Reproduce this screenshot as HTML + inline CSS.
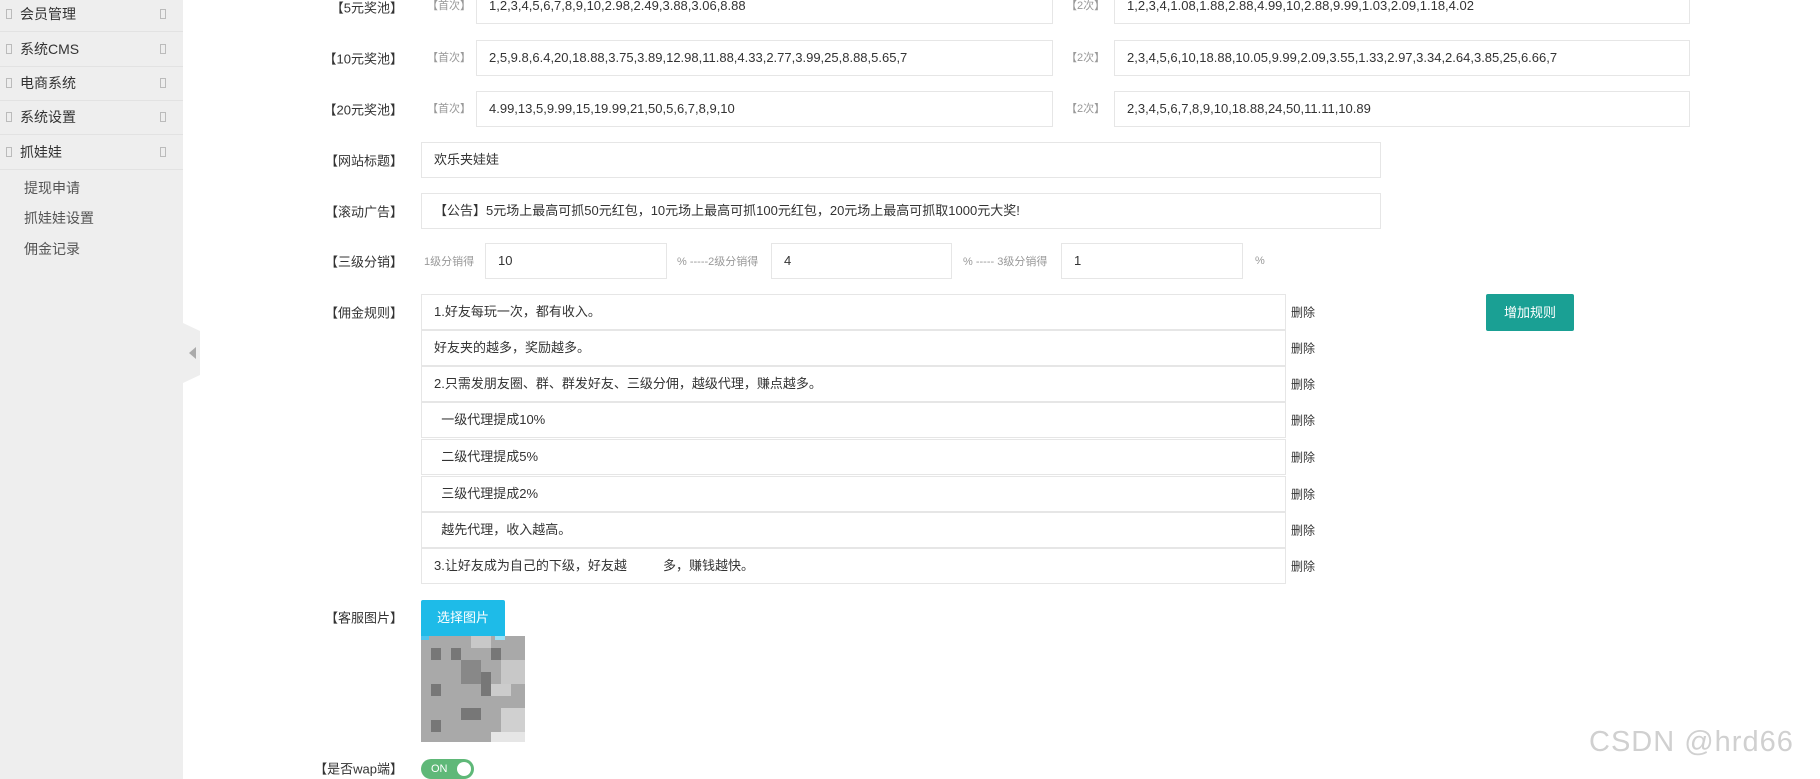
<!DOCTYPE html>
<html><head><meta charset="utf-8"><style>
*{margin:0;padding:0;box-sizing:border-box}
body{width:1820px;height:779px;overflow:hidden;background:#fff;position:relative;font-family:"Liberation Sans","Noto Sans CJK SC",sans-serif;font-size:13px;color:#333}
.a{position:absolute;white-space:pre}
#sb{position:absolute;left:0;top:0;width:183px;height:779px;background:#eeeeee}
.mi{position:absolute;left:0;width:183px;height:35px;border-bottom:1px solid #e2e2e2;font-size:14px;color:#333}
.mi .t{position:absolute;left:20px;top:50%;transform:translateY(-50%)}
.ic{position:absolute;top:50%;width:6px;height:10px;border:1px solid #bbb;transform:translateY(-50%)}
.sub{position:absolute;left:24px;font-size:14px;color:#555}
.lb{position:absolute;right:1417px;font-size:13px;color:#333;transform:translateY(-50%);white-space:nowrap}
.in{position:absolute;height:36px;border:1px solid #e6e6e6;background:#fff;padding-left:12px;line-height:34px;white-space:pre;font-size:13px;color:#333}
.g{position:absolute;font-size:11px;color:#999;transform:translateY(-50%);white-space:nowrap}
.del{position:absolute;left:1291px;font-size:12px;color:#333;transform:translateY(-50%)}
</style></head><body>
<div id="sb">
<div class="mi" style="top:-3px"><span class="ic" style="left:6px"></span><span class="t">会员管理</span><span class="ic" style="left:160px"></span></div>
<div class="mi" style="top:32px"><span class="ic" style="left:6px"></span><span class="t">系统CMS</span><span class="ic" style="left:160px"></span></div>
<div class="mi" style="top:66px"><span class="ic" style="left:6px"></span><span class="t">电商系统</span><span class="ic" style="left:160px"></span></div>
<div class="mi" style="top:100px"><span class="ic" style="left:6px"></span><span class="t">系统设置</span><span class="ic" style="left:160px"></span></div>
<div class="mi" style="top:135px"><span class="ic" style="left:6px"></span><span class="t">抓娃娃</span><span class="ic" style="left:160px"></span></div>
<div class="sub" style="top:178px">提现申请</div>
<div class="sub" style="top:208px">抓娃娃设置</div>
<div class="sub" style="top:239px">佣金记录</div>
</div>
<svg style="position:absolute;left:183px;top:323px" width="17" height="60"><polygon points="0,0 17,8 17,52 0,60" fill="#eeeeee"/><polygon points="13,24 13,36 6,30" fill="#aaa"/></svg>

<div class="lb" style="top:7px">【5元奖池】</div>
<div class="g" style="left:427px;top:5px">【首次】</div>
<div class="in" style="left:476px;top:-12px;width:577px">1,2,3,4,5,6,7,8,9,10,2.98,2.49,3.88,3.06,8.88</div>
<div class="g" style="left:1066px;top:5px">【2次】</div>
<div class="in" style="left:1114px;top:-12px;width:576px">1,2,3,4,1.08,1.88,2.88,4.99,10,2.88,9.99,1.03,2.09,1.18,4.02</div>

<div class="lb" style="top:58px">【10元奖池】</div>
<div class="g" style="left:427px;top:57px">【首次】</div>
<div class="in" style="left:476px;top:40px;width:577px">2,5,9.8,6.4,20,18.88,3.75,3.89,12.98,11.88,4.33,2.77,3.99,25,8.88,5.65,7</div>
<div class="g" style="left:1066px;top:57px">【2次】</div>
<div class="in" style="left:1114px;top:40px;width:576px">2,3,4,5,6,10,18.88,10.05,9.99,2.09,3.55,1.33,2.97,3.34,2.64,3.85,25,6.66,7</div>

<div class="lb" style="top:109px">【20元奖池】</div>
<div class="g" style="left:427px;top:108px">【首次】</div>
<div class="in" style="left:476px;top:91px;width:577px">4.99,13,5,9.99,15,19.99,21,50,5,6,7,8,9,10</div>
<div class="g" style="left:1066px;top:108px">【2次】</div>
<div class="in" style="left:1114px;top:91px;width:576px">2,3,4,5,6,7,8,9,10,18.88,24,50,11.11,10.89</div>

<div class="lb" style="top:160px">【网站标题】</div>
<div class="in" style="left:421px;top:142px;width:960px">欢乐夹娃娃</div>
<div class="lb" style="top:211px">【滚动广告】</div>
<div class="in" style="left:421px;top:193px;width:960px">【公告】5元场上最高可抓50元红包，10元场上最高可抓100元红包，20元场上最高可抓取1000元大奖!</div>

<div class="lb" style="top:261px">【三级分销】</div>
<div class="g" style="left:424px;top:261px">1级分销得</div>
<div class="in" style="left:485px;top:243px;width:182px">10</div>
<div class="g" style="left:677px;top:261px">% -----2级分销得</div>
<div class="in" style="left:771px;top:243px;width:181px">4</div>
<div class="g" style="left:963px;top:261px">% ----- 3级分销得</div>
<div class="in" style="left:1061px;top:243px;width:182px">1</div>
<div class="g" style="left:1255px;top:261px">%</div>

<div class="lb" style="top:312px">【佣金规则】</div>
<div class="in" style="left:421px;top:294px;width:865px">1.好友每玩一次，都有收入。</div>
<div class="in" style="left:421px;top:330px;width:865px">好友夹的越多，奖励越多。</div>
<div class="in" style="left:421px;top:366px;width:865px">2.只需发朋友圈、群、群发好友、三级分佣，越级代理，赚点越多。</div>
<div class="in" style="left:421px;top:402px;width:865px">  一级代理提成10%</div>
<div class="in" style="left:421px;top:439px;width:865px">  二级代理提成5%</div>
<div class="in" style="left:421px;top:476px;width:865px">  三级代理提成2%</div>
<div class="in" style="left:421px;top:512px;width:865px">  越先代理，收入越高。</div>
<div class="in" style="left:421px;top:548px;width:865px">3.让好友成为自己的下级，好友越          多，赚钱越快。</div>
<div class="del" style="top:312px">删除</div>
<div class="del" style="top:348px">删除</div>
<div class="del" style="top:384px">删除</div>
<div class="del" style="top:420px">删除</div>
<div class="del" style="top:457px">删除</div>
<div class="del" style="top:494px">删除</div>
<div class="del" style="top:530px">删除</div>
<div class="del" style="top:566px">删除</div>
<div class="a" style="left:1486px;top:294px;width:88px;height:37px;background:#1aa094;border-radius:2px;color:#fff;font-size:13px;line-height:37px;text-align:center">增加规则</div>

<div class="lb" style="top:617px">【客服图片】</div>
<div class="a" style="left:421px;top:600px;width:84px;height:36px;background:#1ebbe8;border-radius:2px 2px 0 0;color:#fff;font-size:13px;line-height:36px;text-align:center">选择图片</div>
<svg style="position:absolute;left:421px;top:636px" width="104" height="106">
<rect width="104" height="106" fill="#a9a9a9"/>
<rect x="10" y="12" width="10" height="12" fill="#777"/><rect x="30" y="12" width="10" height="12" fill="#777"/><rect x="50" y="0" width="20" height="12" fill="#c8c8c8"/><rect x="70" y="12" width="10" height="12" fill="#777"/>
<rect x="40" y="24" width="20" height="24" fill="#888"/><rect x="60" y="36" width="10" height="24" fill="#777"/><rect x="80" y="24" width="24" height="24" fill="#c8c8c8"/>
<rect x="10" y="48" width="10" height="12" fill="#777"/><rect x="70" y="48" width="20" height="12" fill="#ccc"/>
<rect x="40" y="72" width="20" height="12" fill="#777"/><rect x="80" y="72" width="24" height="24" fill="#d0d0d0"/><rect x="10" y="84" width="10" height="12" fill="#777"/>
<rect x="70" y="96" width="34" height="10" fill="#e6e6e6"/><rect x="0" y="0" width="8" height="4" fill="#4cc4ee"/><rect x="74" y="0" width="10" height="4" fill="#9be0f5"/>
</svg>

<div class="lb" style="top:768px">【是否wap端】</div>
<div class="a" style="left:421px;top:759px;width:53px;height:20px;background:#5fb878;border-radius:10px"><span style="position:absolute;left:10px;top:0;line-height:20px;color:#fff;font-size:11px">ON</span><span style="position:absolute;right:3px;top:3px;width:14px;height:14px;border-radius:50%;background:#fff"></span></div>

<div class="a" style="left:1589px;top:726px;font-size:29px;color:#d0d0d0;letter-spacing:1px">CSDN @hrd66</div>
</body></html>
